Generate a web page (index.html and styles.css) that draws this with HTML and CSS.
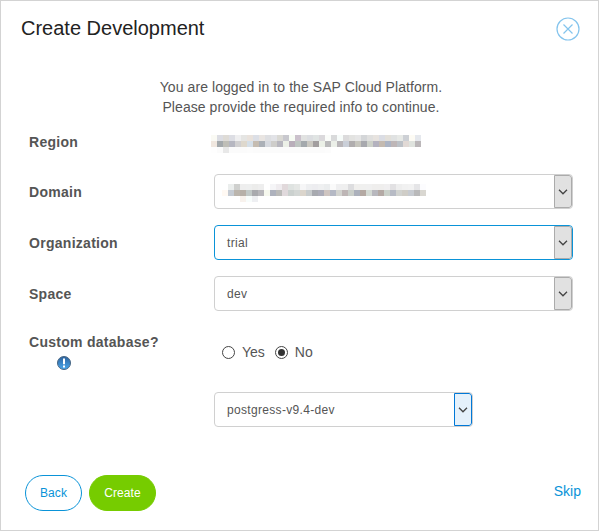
FILE: index.html
```
<!DOCTYPE html>
<html lang="en">
<head>
<meta charset="utf-8">
<title>Create Development</title>
<link rel="stylesheet" href="styles.css">
</head>
<body>
<main class="dialog">
  <header class="header">
    <h1>Create Development</h1>
    <button class="close" aria-label="Close">
      <svg width="24" height="24" viewBox="0 0 24 24"><circle cx="12" cy="12" r="11"/><path d="M7.5 7.5l9 9M16.5 7.5l-9 9"/></svg>
    </button>
  </header>
  <p class="intro">You are logged in to the SAP Cloud Platform.<br>Please provide the required info to continue.</p>
  <form class="form">
    <div class="row region">
      <span class="label">Region</span>
      <svg class="mosaic" id="region" width="210" height="18" shape-rendering="crispEdges"></svg>
    </div>
    <div class="row">
      <span class="label">Domain</span>
      <div class="select"><span class="value masked"><svg class="mosaic" id="domain" width="204" height="18" shape-rendering="crispEdges"></svg></span><span class="arrow"><svg width="10" height="6" viewBox="0 0 10 6"><path d="M1 .8l4 4 4-4"/></svg></span></div>
    </div>
    <div class="row">
      <span class="label">Organization</span>
      <div class="select focused"><span class="value">trial</span><span class="arrow"><svg width="10" height="6" viewBox="0 0 10 6"><path d="M1 .8l4 4 4-4"/></svg></span></div>
    </div>
    <div class="row">
      <span class="label">Space</span>
      <div class="select"><span class="value">dev</span><span class="arrow"><svg width="10" height="6" viewBox="0 0 10 6"><path d="M1 .8l4 4 4-4"/></svg></span></div>
    </div>
    <div class="row database">
      <div class="label">Custom database?
        <svg class="info" width="14" height="14" viewBox="0 0 14 14">
          <defs><linearGradient id="blue" x2="0" y2="1"><stop stop-color="#2d629d"/><stop offset="1" stop-color="#48a8ef"/></linearGradient></defs>
          <circle cx="7" cy="7" r="6.5" fill="url(#blue)" stroke="#476582"/><path d="M6 2.5h2v5.7H6zM6 9.5h2v2H6z" fill="#fff"/>
        </svg>
      </div>
      <div class="radios">
        <span class="radio"></span><span class="option">Yes</span>
        <span class="radio checked"></span><span class="option">No</span>
      </div>
    </div>
    <div class="row version">
      <span></span>
      <div class="select short"><span class="value">postgress-v9.4-dev</span><span class="arrow hover"><svg width="10" height="6" viewBox="0 0 10 6"><path d="M1 .8l4 4 4-4"/></svg></span></div>
    </div>
  </form>
  <footer class="footer">
    <button class="button back">Back</button>
    <button class="button create">Create</button>
    <a class="skip">Skip</a>
  </footer>
</main>
<script src="mosaic.js"></script>
</body>
</html>
```
FILE: mosaic.js
```
const cells = {
  region: [
    "fafaf4 dcdde3 dedbd6 dddee4 efeff0 e5e5e3 e9e2dc dcdfe6 e9e5e2 dedfe2 e2e3e7 dad9d4 c8c8ce f7fcf4 cbc1cc e1e2e1 dcdee1 e0e4e3 dbd9dc fafcf9 d9dadb f7fcfa dcdbdc e3e3e1 e6e6e6 d4d6d8 e0e0df e7e3df dbdde4 e3e0da e0e2e2 e7e9e6 cdd0d5 fdfbf4 e5e8ed",
    "f0e7df a4a9ac bfbeb7 b6b7c1 d1d0d1 ded8cd d5dfe8 c5bcb1 abb0b7 d6d9df cecdca b8b7bf ecf0e7 b9aeba bfc5c2 a4a9ad cac8c1 a29e9f ebf0e7 bababb ebefe8 b9b6b9 cacfd8 b0adae c6c5bd a8a9ae cdd1c9 b4b2bf c4bab0 acb4c4 beb6b7 bcc1c7 e1d9d5 dfe3de bbb7b9",
    "fefefe fbfbfb e8e8e8 fbfbfb fbfbfb fbfbfb fcfcfc fbfbfb fbfbfb fbfbfb fbfbfb fbfbfb fbfbfb fbfbfb fbfbfb fbfbfb fbfbfb fbfbfb fbfbfb fcfcfc"
  ],
  domain: [
    "ffffff ebeeed cfd0ce eeeeee eeefef ececeb eeeeee ffffff f5f5f7 efecef e1d9db dfe3e1 e5e7e5 f6f6f7 eeeff1 ededf0 eff0f1 ebedee fafafa efeff0 efefef dddddf f0efed f0f0ef f0f0f0 efeeed efeeed f0eff0 e2e1e3 eeeeee f1f1f1 f2f2f2 e5e5e7 fcfcfe",
    "fff9f3 c5cbd3 bbb5ad b7b0a8 c2c9c7 a9aaae b8b7bb f6f8ee aeb2bd bbbbb9 e0d9dc cbd1cf d3d7d5 dbd5cc c8cccd a8aab0 adadb9 cfc5c1 b5b9c5 d3d4d0 beb6b6 cacfca acb1bc b4a9a3 d4dad4 b8b8be b4aaa5 cad1ca b7bbc5 d1d3d0 cfcdc7 c7cbd1 b9b9ba d9d7d1",
    "ffffff ffffff ffffff f8f2ed f8fdfc eeeff2"
  ]
};
for (const [id, rows] of Object.entries(cells)) {
  const svg = document.getElementById(id);
  rows.forEach((row, y) => row.split(" ").forEach((color, x) => {
    const rect = document.createElementNS("http://www.w3.org/2000/svg", "rect");
    rect.setAttribute("x", x * 6);
    rect.setAttribute("y", y * 6);
    rect.setAttribute("width", 6);
    rect.setAttribute("height", 6);
    rect.setAttribute("fill", "#" + color);
    svg.append(rect);
  }));
}
```
FILE: styles.css
```
* { box-sizing: border-box; }
body { margin: 0; font: 14px/20px "Liberation Sans", Arial, sans-serif; color: #555; }
svg { display: block; }
.dialog { width: 599px; height: 531px; border: 1px solid #d3d3d3; background: #fff; }
.header { display: flex; justify-content: space-between; align-items: center; height: 56px; padding: 0 18px 0 20px; }
h1 { margin: -2px 0 0; font-size: 20px; font-weight: 400; line-height: 28px; color: #222; }
.close { padding: 0; border: 0; background: none; }
.close svg { fill: none; stroke: #84c4ed; stroke-width: 1.2; }
.intro { margin: 20px 0 0; padding-left: 3px; text-align: center; letter-spacing: .07px; }
.form { padding-left: 28px; }
.row { display: grid; grid-template-columns: 185px 359px; align-items: center; height: 35px; margin-bottom: 16px; }
.label { font-weight: 700; letter-spacing: .28px; }
.region { height: 20px; margin: 15px 0 22px; }
.region .label { margin-top: -2px; }
.region .mosaic { margin: 3px 0 0 -3px; }
.select { display: flex; justify-content: space-between; width: 359px; height: 35px; border: 1px solid #d0d0d0; border-radius: 4px; background: #fff; overflow: hidden; }
.focused { border-color: #0a93d8; }
.short { width: 259px; }
.value { padding-left: 12px; font-size: 12px; line-height: 34px; letter-spacing: .32px; }
.masked { padding: 9px 0 0 7px; }
.arrow { display: flex; align-items: center; justify-content: center; width: 18px; border: 1px solid #ababab; border-radius: 0 3px 3px 0; background: #e1e1e1; }
.arrow svg { fill: none; stroke: #444; stroke-width: 1.3; }
.hover { border-color: #0078d7; background: #e5f1fb; }
.database { height: 40px; margin: 21px 0 0; align-items: start; }
.info { margin: 4px 0 0 28px; }
.radios { display: flex; align-items: center; height: 20px; margin: 10px 0 0 8px; }
.radio { display: grid; place-items: center; width: 13px; height: 13px; border: 1px solid #444; border-radius: 50%; }
.checked::after { content: ""; width: 7px; height: 7px; border-radius: 50%; background: #333; }
.option { margin: 0 10px 0 7px; }
.version { margin: 20px 0 0; }
.footer { display: flex; height: 36px; margin-top: 48px; padding: 0 17px 0 24px; }
.button { height: 36px; padding: 0; border: 1px solid #0a93d8; border-radius: 18px; background: #fff; color: #0a93d8; font: 12px "Liberation Sans", Arial, sans-serif; letter-spacing: .1px; }
.back { width: 57px; margin-right: 7px; }
.create { width: 67px; border-color: #76cc00; background: #76cc00; color: #fff; }
.skip { margin: 6px 0 0 auto; color: #0a93d8; }
```
